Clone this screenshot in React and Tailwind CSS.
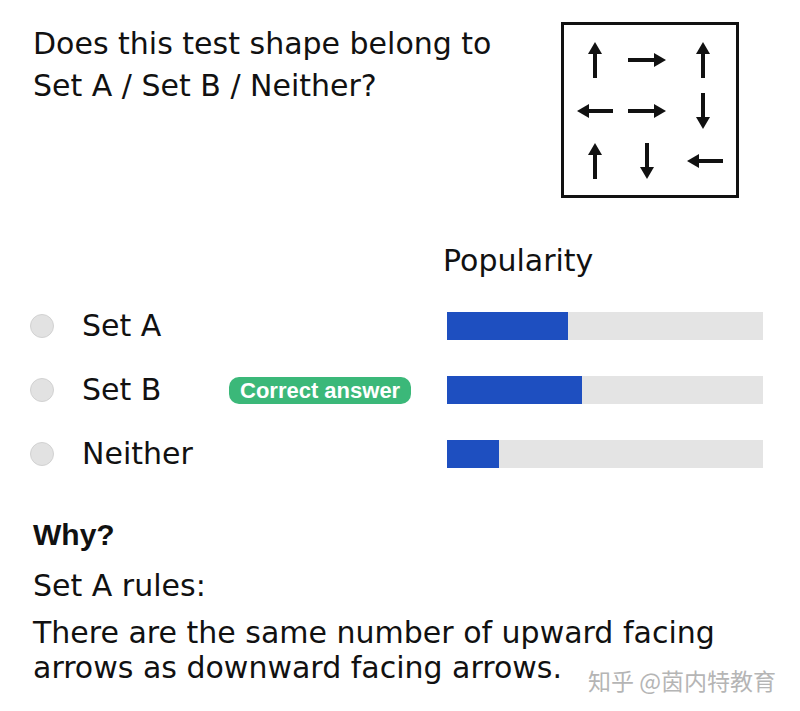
import React from "react";

const font = { fontFamily: '"DejaVu Sans", "Liberation Sans", sans-serif' };
const arial = { fontFamily: '"Liberation Sans", Arial, sans-serif' };

function Arrow({ x1, y1, x2, y2 }) {
  const dx = x2 - x1;
  const dy = y2 - y1;
  const len = Math.hypot(dx, dy);
  const ux = dx / len;
  const uy = dy / len;
  const hl = 12;
  const hw = 7;
  const bx = x2 - ux * hl;
  const by = y2 - uy * hl;
  const pts = `${x2},${y2} ${bx - uy * hw},${by + ux * hw} ${bx + uy * hw},${by - ux * hw}`;
  return (
    <g>
      <line x1={x1} y1={y1} x2={bx + ux} y2={by + uy} stroke="#111" strokeWidth="4" />
      <polygon points={pts} fill="#111" />
    </g>
  );
}

function ArrowBox() {
  const arrows = [
    { x1: 34, y1: 56, x2: 34, y2: 20 },
    { x1: 67, y1: 38, x2: 105, y2: 38 },
    { x1: 142, y1: 56, x2: 142, y2: 20 },
    { x1: 52, y1: 89, x2: 16, y2: 89 },
    { x1: 67, y1: 89, x2: 105, y2: 89 },
    { x1: 142, y1: 71, x2: 142, y2: 107 },
    { x1: 34, y1: 157, x2: 34, y2: 121 },
    { x1: 86, y1: 121, x2: 86, y2: 157 },
    { x1: 162, y1: 139, x2: 126, y2: 139 },
  ];
  return (
    <div className="w-[178px] h-[176px] border-[3px] border-[#111] bg-white">
      <svg width="172" height="170" viewBox="3 3 172 170">
        {arrows.map((a, i) => (
          <Arrow key={i} {...a} />
        ))}
      </svg>
    </div>
  );
}

const options = [
  { label: "Set A", pct: 38.3, correct: false },
  { label: "Set B", pct: 42.7, correct: true },
  { label: "Neither", pct: 16.5, correct: false },
];

export default function App() {
  return (
    <div className="relative w-[800px] h-[711px] bg-white text-[#111] overflow-hidden" style={font}>
      <div className="flex justify-between pl-[33px] pr-[61px] pt-[22px]">
        <h1 className="text-[30px] leading-[42px] font-normal mt-[1px]">
          Does this test shape belong to
          <br />
          Set A / Set B / Neither?
        </h1>
        <ArrowBox />
      </div>

      <div className="pl-[443px] mt-[45px] text-[30px] leading-[36px]">Popularity</div>

      <div className="mt-[33px] flex flex-col gap-[36px]">
        {options.map((o) => (
          <div key={o.label} className="flex items-center h-[28px]">
            <div className="w-[447px] flex items-center pl-[30px]">
              <span className="w-[24px] h-[24px] rounded-full bg-[#e2e2e2] border border-[#d2d2d2]" />
              <span className="ml-[28px] w-[147px] text-[30px] leading-[36px]">{o.label}</span>
              {o.correct && (
                <span
                  className="h-[27px] px-[11px] rounded-[10px] bg-[#3bb879] text-white text-[22px] font-bold leading-[27px] flex items-center"
                  style={arial}
                >
                  Correct answer
                </span>
              )}
            </div>
            <div className="w-[316px] h-[28px] bg-[#e4e4e4]">
              <div className="h-full bg-[#1e4fc0]" style={{ width: `${o.pct}%` }} />
            </div>
          </div>
        ))}
      </div>

      <div className="pl-[33px] mt-[47px]">
        <div className="text-[30px] leading-[40px] font-bold" style={arial}>
          Why?
        </div>
        <div className="text-[30px] leading-[40px] mt-[11px]">Set A rules:</div>
        <p className="text-[30px] leading-[35px] mt-[9px]">
          There are the same number of upward facing
          <br />
          arrows as downward facing arrows.
        </p>
      </div>

      <div
        className="absolute left-[588px] top-[665px] text-[#b5b5b5] text-[23px] leading-[30px]"
        style={{ fontFamily: '"Noto Sans CJK SC", sans-serif' }}
      >
        知乎 @茵内特教育
      </div>
    </div>
  );
}
